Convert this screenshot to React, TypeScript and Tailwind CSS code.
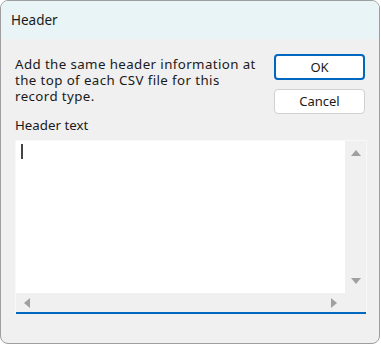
export default function App() {
  return (
    <div className="w-[381px] h-[345px] bg-white">
      <div
        className="w-[380px] h-[344px] rounded-[8px] border border-[#9e9e9e] overflow-hidden flex flex-col bg-[#f0f0f0] text-[#1a1a1a]"
        style={{ fontFamily: '"Noto Sans", "Open Sans", sans-serif' }}
      >
        {/* title bar */}
        <div className="h-[38px] shrink-0 bg-[#e8f4f6] flex items-center pl-[10px] text-[13.5px]">
          Header
        </div>

        <div className="flex flex-col px-[14px] pt-[15px]">
          <div className="flex justify-between items-start">
            <p className="mt-[2px] w-[254px] text-[13.3px] leading-[16px] tracking-[0.4px]">
              Add the same header information at
              <br />
              the top of each CSV file for this
              <br />
              record type.
            </p>
            <div className="flex flex-col gap-[9px]">
              <button className="w-[91px] h-[26px] rounded-[4px] border-2 border-[#0067c0] bg-white text-[13px] leading-none">
                OK
              </button>
              <button className="w-[91px] h-[25px] rounded-[4px] border border-[#d0d0d0] bg-white text-[13px] leading-none">
                Cancel
              </button>
            </div>
          </div>

          <div className="mt-[3px] text-[13.3px] leading-[16px]">Header text</div>

          {/* text area with scrollbars */}
          <div className="mt-[7px] w-[352px] h-[174px] flex flex-col border-l border-r border-t border-[#f8f8f8]">
            <div className="flex flex-1">
              <div className="flex-1 bg-white pl-[5px] pt-[3px]">
                <div className="w-[2px] h-[15px] bg-[#444]" />
              </div>
              <div className="w-[21px] flex flex-col items-center justify-between py-[9px]">
                <svg width="10" height="6" viewBox="0 0 10 6">
                  <path d="M5 0L10 6H0Z" fill="#a0a0a0" />
                </svg>
                <svg width="10" height="6" viewBox="0 0 10 6">
                  <path d="M0 0H10L5 6Z" fill="#a0a0a0" />
                </svg>
              </div>
            </div>
            <div className="h-[19px] flex items-center justify-between pl-[8px] pr-[29px]">
              <svg width="6" height="10" viewBox="0 0 6 10">
                <path d="M0 5L6 0V10Z" fill="#a0a0a0" />
              </svg>
              <svg width="6" height="10" viewBox="0 0 6 10">
                <path d="M6 5L0 0V10Z" fill="#a0a0a0" />
              </svg>
            </div>
            <div className="h-[2px] bg-[#0067c0]" />
          </div>
        </div>
      </div>
    </div>
  );
}
